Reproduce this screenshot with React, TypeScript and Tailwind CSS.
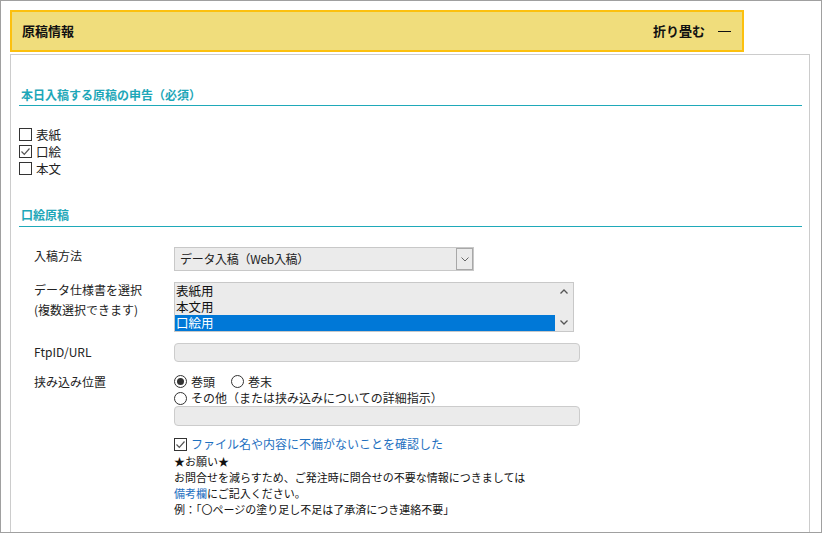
import React from "react";

const font = { fontFamily: '"Noto Sans CJK JP", "Noto Sans", sans-serif' };

function CheckBox({ checked }: { checked?: boolean }) {
  return (
    <span className="inline-flex h-[13px] w-[13px] shrink-0 items-center justify-center border border-[#333] bg-white">
      {checked && (
        <svg width="11" height="11" viewBox="0 0 11 11">
          <path d="M1.5 5.5 L4.3 8.3 L9.5 2.5" fill="none" stroke="#555" strokeWidth="1.2" />
        </svg>
      )}
    </span>
  );
}

function Radio({ checked }: { checked?: boolean }) {
  return (
    <span className="inline-flex h-[13px] w-[13px] shrink-0 items-center justify-center rounded-full border border-[#333] bg-white">
      {checked && <span className="h-[7px] w-[7px] rounded-full bg-[#333]" />}
    </span>
  );
}

function Heading({ children, className }: { children: React.ReactNode; className?: string }) {
  return (
    <div
      className={`border-b border-[#1fa9b9] pl-[2px] text-[12px] font-bold leading-[16px] text-[#1ea7b8] ${className ?? ""}`}
    >
      {children}
    </div>
  );
}

export default function App() {
  return (
    <div
      style={font}
      className="box-border h-[533px] w-[822px] overflow-hidden border border-[#a0a0a0] bg-white pl-[9px] pr-[11px] pt-[9px] text-[#222]"
    >
      <div className="box-border flex h-[42px] w-[734px] items-center justify-between border-2 border-[#fcc00e] bg-[#f0dd7c] pl-[10px] pr-[11px]">
        <span className="text-[13px] font-bold text-[#111]">原稿情報</span>
        <span className="flex items-center text-[13px] font-bold text-[#111]">
          折り畳む
          <span className="ml-[13px] inline-block h-px w-[13px] bg-[#111]" />
        </span>
      </div>

      <div className="mt-[2px] h-[600px] border border-[#cccccc] px-[8px] pr-[7px] pt-[32px]">
        <Heading className="pb-[2px]">本日入稿する原稿の申告（必須）</Heading>

        <div className="mt-[20px] text-[12.5px] leading-[17px]">
          <div className="flex h-[17px] items-center gap-[4px]">
            <CheckBox />
            <span>表紙</span>
          </div>
          <div className="flex h-[17px] items-center gap-[4px]">
            <CheckBox checked />
            <span>口絵</span>
          </div>
          <div className="flex h-[17px] items-center gap-[4px]">
            <CheckBox />
            <span>本文</span>
          </div>
        </div>

        <Heading className="mt-[30px] pb-[3px]">口絵原稿</Heading>

        <div className="pl-[15px] text-[12px]">
          {/* 入稿方法 */}
          <div className="mt-[20px] grid grid-cols-[140px_1fr]">
            <div className="leading-[18px]">入稿方法</div>
            <div className="relative box-border flex h-[24px] w-[300px] items-center border border-[#c8c8c8] bg-[#ebebeb] pl-[5px] text-[12px] tracking-[-0.3px]">
              データ入稿（Web入稿）
              <span className="absolute right-[0px] top-[0px] flex h-[22px] w-[17px] items-center justify-center border border-[#a8a8a8] bg-[#ebebeb]">
                <svg width="8" height="5" viewBox="0 0 8 5">
                  <path d="M0.5 0.5 L4 4 L7.5 0.5" fill="none" stroke="#666" strokeWidth="1" />
                </svg>
              </span>
            </div>
          </div>

          {/* データ仕様書 */}
          <div className="mt-[9px] grid grid-cols-[140px_1fr]">
            <div className="leading-[20px]">
              データ仕様書を選択
              <br />
              (複数選択できます)
            </div>
            <div className="mt-[2px] box-border flex h-[50px] w-[400px] border border-[#c8c8c8] bg-[#ebebeb] text-[12.5px] text-[#111]">
              <div className="flex-1">
                <div className="flex h-[16px] items-center pl-[1px]">表紙用</div>
                <div className="flex h-[16px] items-center pl-[1px]">本文用</div>
                <div className="flex h-[16px] items-center bg-[#0078d7] pl-[1px] text-white">口絵用</div>
              </div>
              <div className="flex w-[18px] flex-col items-center justify-between py-[6px]">
                <svg width="8" height="5" viewBox="0 0 8 5">
                  <path d="M0.5 4.5 L4 1 L7.5 4.5" fill="none" stroke="#555" strokeWidth="1.3" />
                </svg>
                <svg width="8" height="5" viewBox="0 0 8 5">
                  <path d="M0.5 0.5 L4 4 L7.5 0.5" fill="none" stroke="#555" strokeWidth="1.3" />
                </svg>
              </div>
            </div>
          </div>

          {/* FtpID/URL */}
          <div className="mt-[11px] grid grid-cols-[140px_1fr]">
            <div className="leading-[18px]">FtpID/URL</div>
            <div className="box-border h-[19px] w-[406px] rounded-[4px] border border-[#cccccc] bg-[#ebebeb]" />
          </div>

          {/* 挟み込み位置 */}
          <div className="mt-[11px] grid grid-cols-[140px_1fr]">
            <div className="leading-[17px]">挟み込み位置</div>
            <div>
              <div className="flex items-center leading-[17px]">
                <Radio checked />
                <span className="ml-[4px]">巻頭</span>
                <span className="ml-[16px] flex">
                  <Radio />
                </span>
                <span className="ml-[4px]">巻末</span>
              </div>
              <div className="flex items-center leading-[16px]">
                <Radio />
                <span className="ml-[4px]">その他（または挟み込みについての詳細指示）</span>
              </div>
              <div className="box-border h-[20px] w-[406px] rounded-[4px] border border-[#cccccc] bg-[#ebebeb]" />

              <div className="mt-[9px] flex items-center leading-[18px]">
                <CheckBox checked />
                <span className="ml-[4px] text-[12px] text-[#1e70bf]">
                  ファイル名や内容に不備がないことを確認した
                </span>
              </div>
              <div className="text-[11px] leading-[16px] text-[#111]">
                <div>★お願い★</div>
                <div>お問合せを減らすため、ご発注時に問合せの不要な情報につきましては</div>
                <div>
                  <span className="text-[#1e70bf]">備考欄</span>にご記入ください。
                </div>
                <div>例：「〇ページの塗り足し不足は了承済につき連絡不要」</div>
              </div>
            </div>
          </div>
        </div>
      </div>
    </div>
  );
}
